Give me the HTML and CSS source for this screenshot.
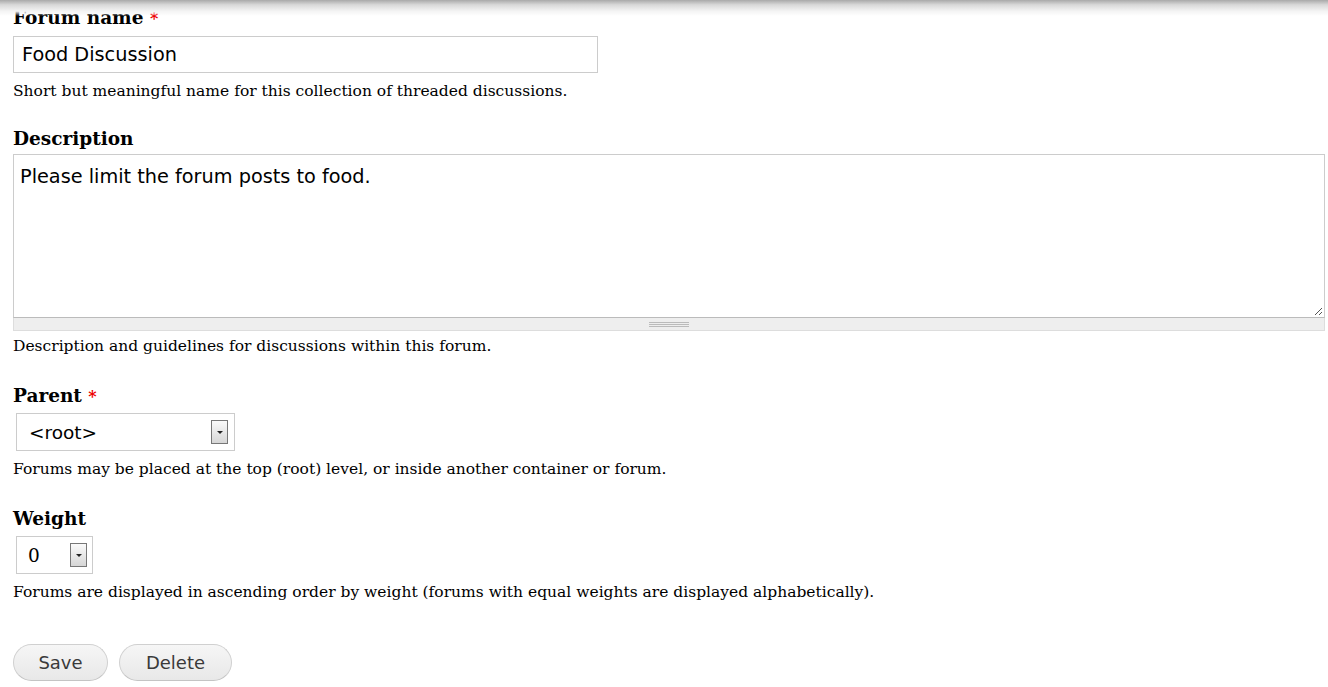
FILE: index.html
```html
<!DOCTYPE html>
<html>
<head>
<meta charset="utf-8">
<link rel="stylesheet" href="styles.css">
</head>
<body>
<div class="shadow"></div>
<form class="form">
  <div class="item item-first">
    <label class="label">Forum name <span class="req">*</span></label>
    <div class="text-input">Food Discussion</div>
    <div class="help">Short but meaningful name for this collection of threaded discussions.</div>
  </div>
  <div class="item item-desc">
    <label class="label">Description</label>
    <div class="textarea">Please limit the forum posts to food.<span class="resize"></span></div>
    <div class="grippie"><span class="grip"></span></div>
    <div class="help help-grip">Description and guidelines for discussions within this forum.</div>
  </div>
  <div class="item item-parent">
    <label class="label">Parent <span class="req">*</span></label>
    <div class="select select-parent"><span class="val">&lt;root&gt;</span><span class="arrow"></span></div>
    <div class="help">Forums may be placed at the top (root) level, or inside another container or forum.</div>
  </div>
  <div class="item item-weight">
    <label class="label">Weight</label>
    <div class="select select-weight"><span class="val">0</span><span class="arrow"></span></div>
    <div class="help">Forums are displayed in ascending order by weight (forums with equal weights are displayed alphabetically).</div>
  </div>
  <div class="actions">
    <button type="button" class="btn btn-save">Save</button>
    <button type="button" class="btn btn-delete">Delete</button>
  </div>
</form>
</body>
</html>
```

FILE: styles.css
```css
html, body {
  margin: 0;
  padding: 0;
  background: #fff;
}
body {
  font-family: "DejaVu Serif", Georgia, serif;
  color: #000;
  width: 1328px;
  height: 687px;
  overflow: hidden;
  position: relative;
}
.shadow {
  position: absolute;
  left: 0;
  top: 0;
  width: 100%;
  height: 16px;
  background: linear-gradient(to bottom, #a9a9a9 0%, #d8d8d8 30%, #f4f4f4 70%, rgba(255,255,255,0) 100%);
  pointer-events: none;
  z-index: 2;
}
.form {
  padding: 0 0 0 13px;
}
.item {
  display: flex;
  flex-direction: column;
  align-items: flex-start;
}
.item-first {
  padding-top: 6px;
}
.item-desc {
  margin-top: 26px;
}
.item-parent,
.item-weight {
  margin-top: 28px;
}
.label {
  font-weight: bold;
  font-size: 18.5px;
  line-height: 24px;
  height: 24px;
}
.req {
  color: #e00;
  font-size: 16px;
}
.help {
  font-size: 15.5px;
  line-height: 20px;
  margin-top: 8px;
  white-space: nowrap;
}
.help-grip {
  margin-top: 5px;
}
.text-input {
  margin-top: 6px;
  width: 575px;
  height: 35px;
  border: 1px solid #ccc;
  font-family: "DejaVu Sans", Verdana, sans-serif;
  font-size: 19.3px;
  line-height: 35px;
  padding-left: 8px;
  box-sizing: content-box;
}
.textarea {
  margin-top: 3px;
  position: relative;
  width: 1312px;
  height: 164px;
  border: 1px solid #ccc;
  border-bottom: 1px solid #bbb;
  font-family: "DejaVu Sans", Verdana, sans-serif;
  font-size: 19.3px;
  line-height: 22px;
  padding: 11px 0 0 6px;
  box-sizing: border-box;
}
.resize {
  position: absolute;
  right: 2px;
  bottom: 2px;
  width: 7px;
  height: 7px;
  background: linear-gradient(135deg, transparent 45%, #555 45%, #555 52%, transparent 52%, transparent 72%, #555 72%, #555 80%, transparent 80%);
}
.grippie {
  width: 1312px;
  height: 13px;
  background: #eee;
  border: 1px solid #ddd;
  border-top: none;
  box-sizing: border-box;
  display: flex;
  justify-content: center;
  align-items: center;
}
.grip {
  width: 40px;
  height: 9px;
  background: linear-gradient(to bottom, transparent 0, transparent 2px, #bbb 2px, #bbb 3px, transparent 3px, transparent 4px, #bbb 4px, #bbb 5px, transparent 5px, transparent 6px, #bbb 6px, #bbb 7px, transparent 7px);
}
.select {
  margin-top: 5px;
  margin-left: 3px;
  height: 38px;
  border: 1px solid #ccc;
  box-sizing: border-box;
  display: flex;
  align-items: center;
  justify-content: space-between;
  font-family: "DejaVu Sans", Verdana, sans-serif;
  font-size: 18.5px;
}
.select-parent {
  width: 219px;
  padding: 0 6px 0 12px;
}
.select-weight {
  width: 77px;
  padding: 0 5px 0 11px;
}
.select-weight .val {
  font-family: "DejaVu Serif", Georgia, serif;
  font-size: 18.5px;
}
.select + .help {
  margin-top: 8px;
}
.arrow {
  width: 17px;
  height: 24px;
  box-sizing: border-box;
  border: 1px solid #777;
  background: linear-gradient(to bottom, #fafafa, #d6d6d6);
  position: relative;
}
.arrow::after {
  content: "";
  position: absolute;
  left: 5px;
  top: 10px;
  border-left: 3px solid transparent;
  border-right: 3px solid transparent;
  border-top: 3px solid #222;
}
.actions {
  margin-top: 42px;
  display: flex;
  gap: 11px;
}
.btn {
  font-family: "DejaVu Sans", Verdana, sans-serif;
  font-size: 18px;
  color: #3a3a3a;
  background: linear-gradient(to bottom, #f6f6f6, #e8e8e8);
  border: 1px solid #d0d0d0;
  border-bottom-color: #c4c4c4;
  border-radius: 20px;
  height: 37px;
  padding: 0;
  cursor: pointer;
}
.btn-save {
  width: 95px;
}
.btn-delete {
  width: 113px;
}
```
